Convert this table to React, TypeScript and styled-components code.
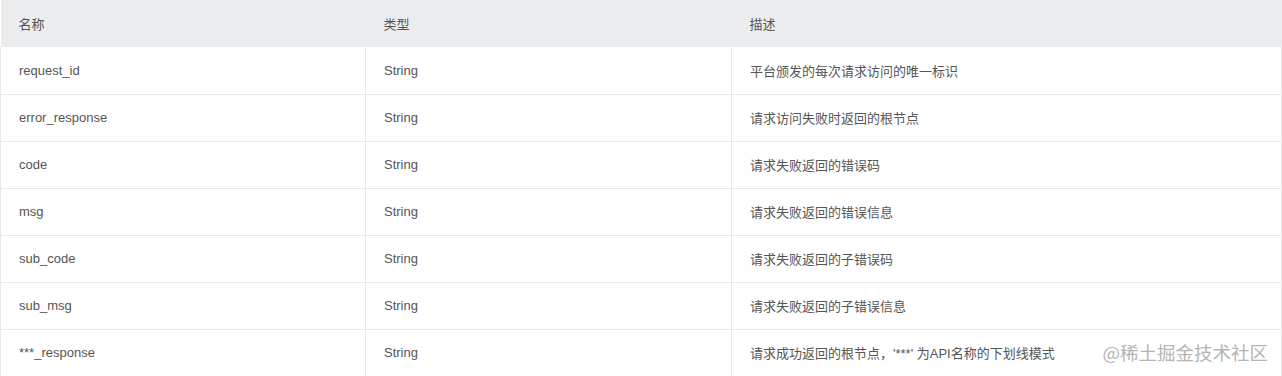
import { FC } from "react";
import styled, { createGlobalStyle } from "styled-components";

// Global
const GlobalStyle = createGlobalStyle`
  body {
    margin: 0;
    background: #fff;
    font-family: "Liberation Sans", "Noto Sans CJK SC", sans-serif;
  }
`;

// Data
const rows = [
  { name: "request_id", type: "String", desc: "平台颁发的每次请求访问的唯一标识" },
  { name: "error_response", type: "String", desc: "请求访问失败时返回的根节点" },
  { name: "code", type: "String", desc: "请求失败返回的错误码" },
  { name: "msg", type: "String", desc: "请求失败返回的错误信息" },
  { name: "sub_code", type: "String", desc: "请求失败返回的子错误码" },
  { name: "sub_msg", type: "String", desc: "请求失败返回的子错误信息" },
  { name: "***_response", type: "String", desc: "请求成功返回的根节点，'***' 为API名称的下划线模式" },
];

// Styled Components
const StyledPage = styled.div`
  position: relative;
  width: 1281px;
`;

const StyledTable = styled.table`
  width: 1281px;
  border-collapse: collapse;
  table-layout: fixed;
  font-size: 13px;
  color: #555;
`;

const StyledHeadCell = styled.th<{ $width: number }>`
  width: ${({ $width }) => $width}px;
  height: 47px;
  padding: 0 0 0 18px;
  background: #ebecee;
  font-weight: 400;
  text-align: left;
  box-sizing: border-box;
`;

const StyledCell = styled.td`
  height: 47px;
  padding: 0 0 0 18px;
  border: 1px solid #e8e8e8;
  border-top: none;
  box-sizing: border-box;
  white-space: nowrap;
`;

const StyledWatermark = styled.div`
  position: absolute;
  right: 13px;
  bottom: 12px;
  font-family: "Noto Sans CJK SC", sans-serif;
  font-size: 18.5px;
  color: #b5b5b5;
`;

const App: FC = () => {
  return (
    <StyledPage>
      <GlobalStyle />
      <StyledTable>
        <thead>
          <tr>
            <StyledHeadCell $width={365}>名称</StyledHeadCell>
            <StyledHeadCell $width={366}>类型</StyledHeadCell>
            <StyledHeadCell $width={550}>描述</StyledHeadCell>
          </tr>
        </thead>
        <tbody>
          {rows.map((r) => (
            <tr key={r.name}>
              <StyledCell>{r.name}</StyledCell>
              <StyledCell>{r.type}</StyledCell>
              <StyledCell>{r.desc}</StyledCell>
            </tr>
          ))}
        </tbody>
      </StyledTable>
      <StyledWatermark>@稀土掘金技术社区</StyledWatermark>
    </StyledPage>
  );
};

export default App;
